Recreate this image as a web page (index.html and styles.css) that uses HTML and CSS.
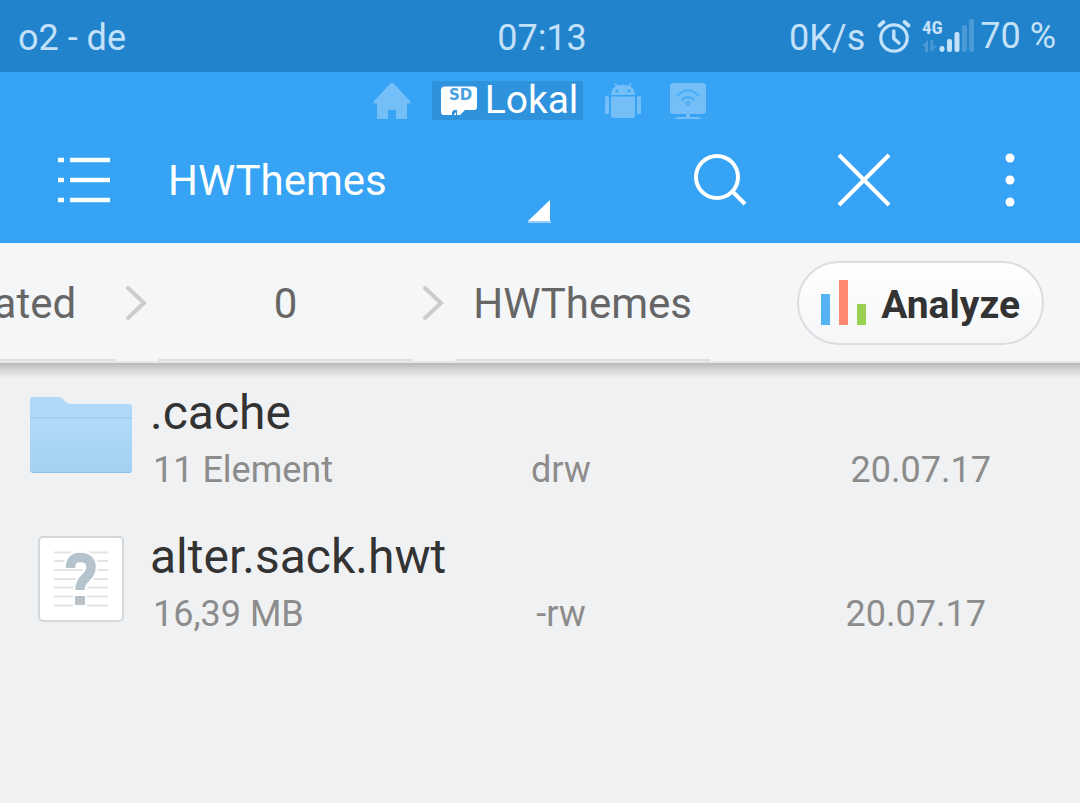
FILE: index.html
```html
<!DOCTYPE html>
<html lang="de">
<head>
<meta charset="utf-8">
<meta name="viewport" content="width=device-width, initial-scale=1">
<title>HWThemes</title>
<link rel="stylesheet" href="styles.css">
</head>
<body>
<div class="status">
  <span>o2 - de</span>
  <time class="status-time">07:13</time>
  <div class="status-right">
    <span>0K/s</span>
    <svg class="alarm" width="34" height="36" viewBox="0 0 34 36" fill="none" stroke="currentColor" stroke-linecap="round" stroke-linejoin="round" aria-label="Alarm">
      <circle cx="17" cy="20" r="13.2" stroke-width="3.2"/>
      <path d="M16.800 13v7.500l5 4.500" stroke-width="3.400"/>
      <path d="M2.500 7.500l4-3.500M31.500 7.500l-4-3.500" stroke-width="3.800"/>
    </svg>
    <svg class="signal" width="52" height="36" viewBox="0 0 52 36" fill="currentColor" aria-label="4G">
      <text class="net" x="0" y="16">4G</text>
      <g opacity=".25">
        <path d="M6 22v12H3v-6H0zM8.500 22h2.500v6h4l-6.500 6z"/>
        <rect x="40" y="7" width="5" height="27" rx="2"/>
        <rect x="47" y="1" width="5" height="33" rx="2"/>
      </g>
      <rect x="17.500" y="28" width="5" height="6" rx="2.400"/>
      <rect x="25" y="21" width="5" height="13" rx="2"/>
      <rect x="32.500" y="14" width="5" height="20" rx="2"/>
    </svg>
    <span class="battery">70 %</span>
  </div>
</div>

<header class="header">
  <nav class="tabs" aria-label="Bereiche">
    <button class="tab" type="button" aria-label="Home">
      <svg width="38" height="38" viewBox="0 0 38 38" fill="currentColor"><path d="M19 1q-1 0-2 1L1 19q-1.500 2 .5 2.500H4V37h11v-8q0-1 1-1h6q1 0 1 1v8h11V21.500h2.500q2-.5.5-2.500L21 2q-1-1-2-1z"/></svg>
    </button>
    <button class="tab tab-active" type="button">
      <svg width="38" height="32" viewBox="0 0 38 32" fill="currentColor"><path d="M5 1.500h29q3 0 3 3V22q0 3-3 3h-9L20 30h-3v-4h-2q-1 0-1.500 1.500Q13 30 11 30H4q-3 0-3-3V5.500q0-4 4-4z"/><path d="M12 30v-3l2-2h3v5" fill="#2e92dd"/><path d="M13.500 30l2.500-3v3z"/><text class="sd" x="9" y="15">SD</text></svg>
      <span>Lokal</span>
    </button>
    <button class="tab" type="button" aria-label="Apps">
      <svg width="38" height="36" viewBox="0 0 38 36" fill="currentColor"><path fill-rule="evenodd" d="M7 12Q7 6 12 3l-2-2.500L11.500 0l2.500 2.500q5-1.500 10 0L26.500 0l1.500.5L26 3q5 3 5 9zM13 6.500a1.500 1.500 0 1 0 .01 0zM25 6.500a1.500 1.500 0 1 0 .01 0z"/><path d="M7 13.500h24V33q0 2-2 2H9q-2 0-2-2z"/><rect x="1" y="13" width="4" height="18" rx="1.500"/><rect x="33" y="13" width="4" height="18" rx="1.500"/></svg>
    </button>
    <button class="tab" type="button" aria-label="Netzwerk">
      <svg width="38" height="38" viewBox="0 0 38 38"><path fill="currentColor" d="M4 1h30q3 0 3 3v25q0 3-3 3H21v3h8q3 0 3 2H6q0-2 3-2h8v-3H4q-3 0-3-3V4q0-3 3-3z"/><g fill="none" stroke="#36a3f5" stroke-width="2.500" opacity=".6"><path d="M8 14q11-11 22 0M13 18q6-6 12 0"/><circle cx="19" cy="21.500" r="1.300"/></g></svg>
    </button>
  </nav>
  <div class="toolbar">
    <button class="tool tool-menu" type="button" aria-label="Menü">
      <svg width="54" height="48" viewBox="0 0 54 48" stroke="currentColor" stroke-width="4.500"><path d="M1 4h6M13 4h40M1 24h6M13 24h40M1 44h6M13 44h40"/></svg>
    </button>
    <button class="place" type="button">
      <span>HWThemes</span>
      <svg class="corner" width="23" height="24" viewBox="0 0 23 24"><path d="M22 1v21H0z" fill="#fff"/><path d="M0 23h23" stroke="#b8dcfa" stroke-width="1.500"/></svg>
    </button>
    <button class="tool" type="button" aria-label="Suchen">
      <svg width="54" height="54" viewBox="0 0 54 54" fill="none" stroke="currentColor" stroke-width="4"><circle cx="24" cy="24" r="21"/><path d="M40 39l12 12"/></svg>
    </button>
    <button class="tool" type="button" aria-label="Schließen">
      <svg width="54" height="54" viewBox="0 0 54 54" stroke="currentColor" stroke-width="4"><path d="M2 2l50 50M52 2L2 52"/></svg>
    </button>
    <button class="tool tool-more" type="button" aria-label="Mehr">
      <svg width="10" height="54" viewBox="0 0 10 54" fill="currentColor"><circle cx="5" cy="5" r="4.500"/><circle cx="5" cy="27" r="4.500"/><circle cx="5" cy="49" r="4.500"/></svg>
    </button>
  </div>
</header>

<div class="pathbar">
  <nav class="crumbs" aria-label="Pfad">
    <a class="crumb" href="#">emulated</a>
    <svg class="chevron" width="42" height="36" viewBox="0 0 42 36"><path d="M12 3l16 15-16 15"/></svg>
    <a class="crumb" href="#">0</a>
    <svg class="chevron" width="42" height="36" viewBox="0 0 42 36"><path d="M12 3l16 15-16 15"/></svg>
    <a class="crumb" href="#">HWThemes</a>
  </nav>
  <button class="analyze" type="button">
    <svg width="46" height="46" viewBox="0 0 46 46"><path fill="#56b3f2" d="M0 14h9v31H0z"/><path fill="#ff8872" d="M18 0h9v45h-9z"/><path fill="#98d052" d="M36 24h9v21h-9z"/></svg>
    <span>Analyze</span>
  </button>
</div>

<main class="list">
  <article class="row">
    <svg class="row-icon" width="102" height="76" viewBox="0 0 102 76">
      <defs><linearGradient id="fold" x1="0" y1="0" x2="0" y2="1"><stop offset="0" stop-color="#b0d9f9"/><stop offset=".35" stop-color="#b0d9f9"/><stop offset="1" stop-color="#a2d1f1"/></linearGradient></defs>
      <path fill="url(#fold)" d="M3 0h26q2 0 4 2l3 3q2 2 5 2h58q3 0 3 3v63q0 3-3 3H3q-3 0-3-3V3q0-3 3-3z"/>
      <path d="M0 21h102" stroke="#a1cfee" stroke-width="2"/>
      <path d="M2 75.500h98" stroke="#86c2ea"/>
    </svg>
    <div class="row-text">
      <h2 class="name">.cache</h2>
      <div class="meta"><span>11 Element</span><span class="perm">drw</span><span class="date">20.07.17</span></div>
    </div>
  </article>
  <article class="row row-file">
    <svg class="row-icon" width="86" height="86" viewBox="0 0 86 86">
      <rect x="1" y="1" width="84" height="84" rx="4" fill="#fff" stroke="#d5d8db" stroke-width="2"/>
      <path d="M16 16.500h54M16 25h54M16 34h54M16 43h54M16 51.500h54M16 60.500h54M16 69.500h54" stroke="#e2e4e6" stroke-width="2"/>
      <g fill="none"><path d="M32 32Q32 21.500 42 21.500Q53 21.500 53 31Q53 37 47 42.500Q42 46.500 42 54" stroke="#fff" stroke-width="14"/><path d="M35 57h14v14H35z" fill="#fff"/><path d="M32.500 32Q32.500 21.500 42 21.500Q53 21.500 53 31Q53 37 47 42.500Q42 46.500 42 54" stroke="#b5c3cc" stroke-width="9.500"/></g>
      <path d="M37 60h10v9H37z" fill="#b9c1c7"/>
    </svg>
    <div class="row-text">
      <h2 class="name">alter.sack.hwt</h2>
      <div class="meta"><span>16,39 MB</span><span class="perm">-rw</span><span class="date">20.07.17</span></div>
    </div>
  </article>
</main>
</body>
</html>
```
FILE: styles.css
```css
* { box-sizing: border-box; }
body {
  margin: 0;
  min-height: 100vh;
  background: #f0f1f3;
  color: #333;
  font-family: Roboto, "Liberation Sans", sans-serif;
}
button {
  margin: 0;
  padding: 0;
  border: 0;
  background: none;
  color: inherit;
  font: inherit;
  cursor: pointer;
}
svg { display: block; flex: none; }

.status {
  display: grid;
  grid-template-columns: 1fr auto 1fr;
  align-items: center;
  height: 72px;
  padding: 0 24px 0 18px;
  background: #2083cc;
  color: #c3e1f8;
  font-size: 36px;
  line-height: 44px;
  white-space: nowrap;
}
.status > span, .status-time, .status-right > span { padding-top: 3px; }
.status > .status-time { padding-left: 10px; }
.status-right {
  display: flex;
  justify-content: flex-end;
  align-items: center;
}
.alarm { margin: 0 11px 0 12px; }
.signal { overflow: visible; }
.status-right > .battery { padding: 0; margin-left: 6px; }
.net { font: 700 19px "Roboto Condensed", "Liberation Sans Narrow", Roboto, sans-serif; }

.header { background: #36a3f5; color: #fff; }
.tabs {
  display: flex;
  justify-content: center;
  align-items: center;
  gap: 21px;
  padding-top: 9px;
}
.tab { color: #74bff8; }
.tab:last-child { margin-left: 6px; }
.tab-active {
  display: flex;
  align-items: center;
  gap: 7px;
  height: 39px;
  padding: 0 5px 0 8px;
  background: #2e92dd;
  color: #fff;
  font-size: 39px;
  line-height: 39px;
}
.sd { fill: #4a9fe0; font: 700 15px "DejaVu Sans", sans-serif; }

.toolbar { display: flex; height: 123px; }
.tool {
  display: flex;
  flex: 0 0 144px;
  align-items: center;
  justify-content: center;
  padding-bottom: 3px;
}
.tool-menu { flex-basis: 168px; }
.tool-more { padding-left: 4px; }
.place {
  display: flex;
  flex: 1;
  align-items: center;
  justify-content: space-between;
  margin-right: 97px;
  font-size: 42px;
}
.place span { padding-bottom: 2px; }
.corner { align-self: flex-end; margin-bottom: 20px; }

.pathbar {
  position: relative;
  display: flex;
  align-items: center;
  height: 120px;
  padding: 2px 36px 0 0;
  border-bottom: 2px solid #e6e7e9;
  background: #f5f6f8;
}
.pathbar::after {
  content: "";
  position: absolute;
  top: 100%;
  left: 0;
  right: 0;
  height: 16px;
  margin-top: 2px;
  background: linear-gradient(#b8b9bb, #d9dadc 50%, #f0f1f3);
}
.crumbs {
  display: flex;
  flex: 1;
  align-items: center;
  justify-content: flex-end;
  min-width: 0;
  height: 116px;
  margin-right: 87px;
  overflow: hidden;
}
.crumb {
  flex: 0 0 255px;
  height: 116px;
  border-bottom: 2px solid #dfe0e2;
  color: #666;
  font-size: 42px;
  line-height: 117px;
  text-align: center;
  text-decoration: none;
}
.chevron {
  fill: none;
  stroke: #cbccce;
  stroke-width: 4;
  stroke-linecap: round;
}
.analyze {
  display: flex;
  align-items: center;
  gap: 14px;
  height: 84px;
  padding: 0 22px;
  border: 2px solid #dcdddf;
  border-radius: 42px;
  background: linear-gradient(#fff, #f5f6f8);
  font-size: 39px;
  font-weight: 700;
}
.analyze span { padding-top: 3px; }

.row {
  display: grid;
  grid-template-columns: 102px 1fr;
  align-items: center;
  gap: 18px;
  height: 144px;
  padding-left: 30px;
}
.row-icon { justify-self: center; }
.row-text { padding-top: 10px; }
.name {
  margin: 0;
  font-size: 48px;
  font-weight: 400;
  line-height: 60px;
}
.meta {
  display: grid;
  grid-template-columns: 298px 220px 1fr;
  padding: 0 89px 0 3px;
  color: #8c8c8c;
  font-size: 36px;
  line-height: 54px;
}
.row-file .meta { padding-right: 94px; }
.perm { text-align: center; }
.date { text-align: right; }
```
